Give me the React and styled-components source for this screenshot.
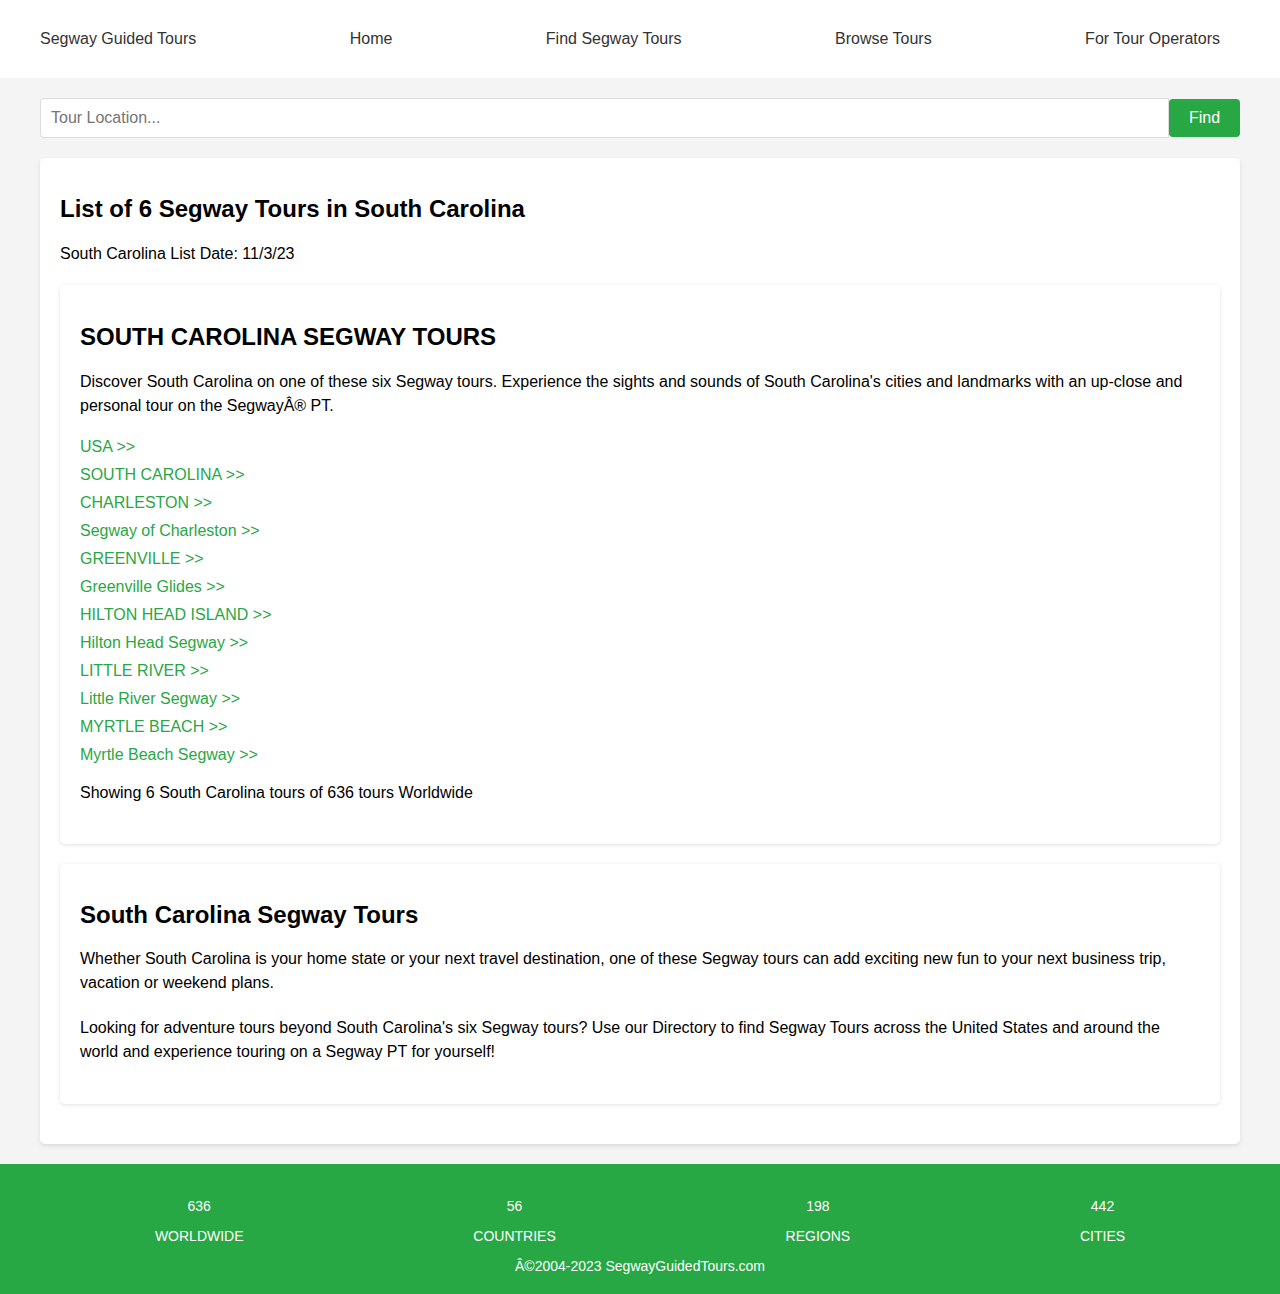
import React from 'react';
import styled, { createGlobalStyle } from 'styled-components';

const GlobalStyle = createGlobalStyle`
  body {
    margin: 0;
    background: #f4f4f4;
    font-family: "Liberation Sans", Arial, sans-serif;
    font-size: 16px;
    line-height: 1.5;
    color: #000;
  }
`;

const StyledHeader = styled.header`
  background: #fff;
  height: 78px;
  padding: 0 60px 0 40px;
  box-sizing: border-box;
`;

const StyledNav = styled.nav`
  display: flex;
  justify-content: space-between;
  align-items: center;
  height: 77px;
`;

const NavLink = styled.a`
  color: #333;
  text-decoration: none;
  font-size: 16px;
`;

const StyledMain = styled.main`
  padding: 20px 40px;
`;

const SearchForm = styled.form`
  display: flex;
  margin: 0 0 20px;
`;

const SearchInput = styled.input`
  flex: 1;
  height: 40px;
  box-sizing: border-box;
  padding: 0 10px;
  border: 1px solid #ddd;
  border-radius: 4px 0 0 4px;
  font-family: inherit;
  font-size: 16px;
  color: #333;
  outline: none;

  &::placeholder {
    color: #757575;
  }
`;

const FindButton = styled.button`
  width: 71px;
  height: 38px;
  margin-top: 1px;
  border: 0;
  border-radius: 4px;
  background: #28a745;
  color: #fff;
  font-family: inherit;
  font-size: 16px;
`;

const Card = styled.section`
  background: #fff;
  border-radius: 5px;
  box-shadow: 0 2px 4px rgba(0, 0, 0, 0.1);
  padding: 20px;
  ${(props) => props.inner && 'margin: 19px 0 20px;'}
  ${(props) => props.inner && 'box-shadow: 0 1px 4px rgba(0, 0, 0, 0.12);'}
`;

const Title = styled.h2`
  font-size: 24px;
  line-height: 1.2;
  font-weight: bold;
  margin: ${(props) => props.top || 18}px 0 18px;
`;

const Text = styled.p`
  margin: 0 0 ${(props) => props.gap || 20}px;
`;

const LinkList = styled.div`
  display: flex;
  flex-direction: column;
  gap: 4px;
  margin: 0 0 14px;
`;

const TourLink = styled.a`
  color: #28a745;
  text-decoration: none;
`;

const StyledFooter = styled.footer`
  background: #28a745;
  color: #fff;
  font-size: 14px;
  padding: 32px 40px 17px;
  display: flex;
  flex-direction: column;
  gap: 9px;
  text-align: center;
`;

const Stats = styled.div`
  display: flex;
  justify-content: space-around;
`;

const Stat = styled.div`
  display: flex;
  flex-direction: column;
  gap: 9px;
`;

const navItems = ['Segway Guided Tours', 'Home', 'Find Segway Tours', 'Browse Tours', 'For Tour Operators'];

const links = [
  'USA >>',
  'SOUTH CAROLINA >>',
  'CHARLESTON >>',
  'Segway of Charleston >>',
  'GREENVILLE >>',
  'Greenville Glides >>',
  'HILTON HEAD ISLAND >>',
  'Hilton Head Segway >>',
  'LITTLE RIVER >>',
  'Little River Segway >>',
  'MYRTLE BEACH >>',
  'Myrtle Beach Segway >>',
];

const stats = [
  { value: 636, label: 'WORLDWIDE' },
  { value: 56, label: 'COUNTRIES' },
  { value: 198, label: 'REGIONS' },
  { value: 442, label: 'CITIES' },
];

const App = () => (
  <>
    <GlobalStyle />
    <StyledHeader>
      <StyledNav>
        {navItems.map((item) => (
          <NavLink key={item} href="#">{item}</NavLink>
        ))}
      </StyledNav>
    </StyledHeader>

    <StyledMain>
      <SearchForm onSubmit={(e) => e.preventDefault()}>
        <SearchInput placeholder="Tour Location..." />
        <FindButton type="submit">Find</FindButton>
      </SearchForm>

      <Card>
        <Title top={17}>List of 6 Segway Tours in South Carolina</Title>
        <Text gap={18}>South Carolina List Date: 11/3/23</Text>

        <Card inner>
          <Title>SOUTH CAROLINA SEGWAY TOURS</Title>
          <Text gap={17}>
            Discover South Carolina on one of these six Segway tours. Experience the sights and sounds of
            South Carolina&apos;s cities and landmarks with an up-close and personal tour on the SegwayÂ® PT.
          </Text>
          <LinkList>
            {links.map((link) => (
              <TourLink key={link} href="#">{link}</TourLink>
            ))}
          </LinkList>
          <Text gap={19}>Showing 6 South Carolina tours of 636 tours Worldwide</Text>
        </Card>

        <Card inner>
          <Title top={17}>South Carolina Segway Tours</Title>
          <Text gap={21}>
            Whether South Carolina is your home state or your next travel destination, one of these Segway
            tours can add exciting new fun to your next business trip, vacation or weekend plans.
          </Text>
          <Text>
            Looking for adventure tours beyond South Carolina&apos;s six Segway tours? Use our Directory to
            find Segway Tours across the United States and around the world and experience touring on a
            Segway PT for yourself!
          </Text>
        </Card>
      </Card>
    </StyledMain>

    <StyledFooter>
      <Stats>
        {stats.map((stat) => (
          <Stat key={stat.label}>
            <div>{stat.value}</div>
            <div>{stat.label}</div>
          </Stat>
        ))}
      </Stats>
      <div>Â©2004-2023 SegwayGuidedTours.com</div>
    </StyledFooter>
  </>
);

export default App;
